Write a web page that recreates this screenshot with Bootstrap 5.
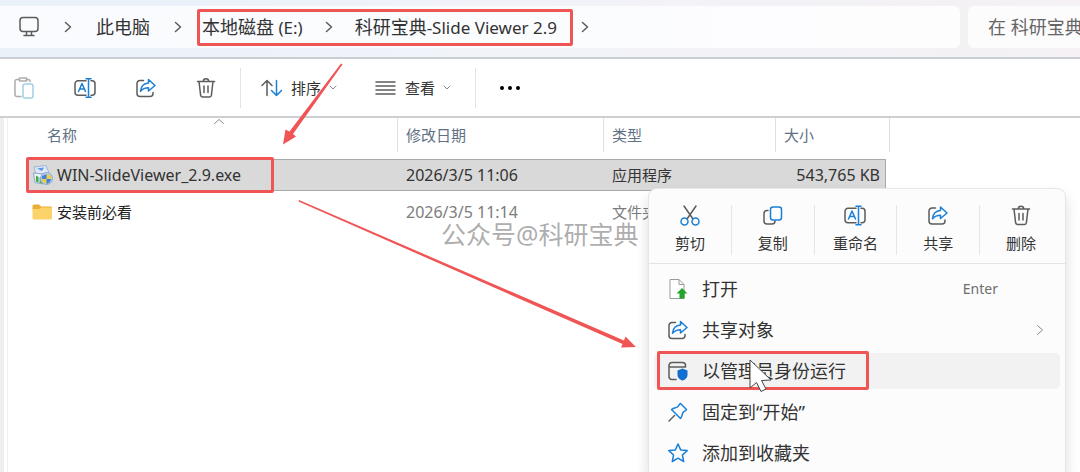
<!DOCTYPE html>
<html lang="zh-CN">
<head>
<meta charset="utf-8">
<meta name="viewport" content="width=device-width, initial-scale=1">
<title>科研宝典-Slide Viewer 2.9</title>
<link href="https://cdn.jsdelivr.net/npm/bootstrap@5.3.0/dist/css/bootstrap.min.css" rel="stylesheet">
<style>
  :root { --ink:#333; --dim:#6e6e6e; --blue:#1a7fd6; --steel:#5f7183; --mark-red:#f05555; }
  body { font-family:"Noto Sans","Noto Sans CJK SC",sans-serif; font-size:16px; line-height:24px; color:var(--ink); background:#fff; overflow:hidden; min-height:100vh; }
  svg { display:block; flex:none; }
  .ic { fill:none; stroke:#5c5c5c; stroke-width:1.5; stroke-linecap:round; stroke-linejoin:round; }
  .ic .b { stroke:var(--blue); }
  .ic.thin { stroke-width:1; stroke:#888; }
  button, a { color:inherit; }
  .plain { border:0; background:none; padding:0; }

  .addressbar { background:linear-gradient(90deg,#e9f1f9,#f1f3f9 45%,#f5f1f4); border-bottom:2px solid #c9ced4; padding:6px 0 9px; gap:8px; }
  .pathbox { background:linear-gradient(90deg,#f9fbfe,#fdfdfe); height:42px; border-radius:0 6px 6px 0; padding-left:18px; font-size:18px; }
  .pathbox a { text-decoration:none; white-space:nowrap; }
  .pathbox .en { font-size:17px; }
  .searchbox { width:112px; height:42px; border:0; border-radius:6px 0 0 6px; background:#fdfcfd; font-size:18px; color:#555; padding:0 0 0 20px; outline:0; }
  .searchbox::placeholder { color:#666; opacity:1; }
  .redbox { border:3px solid var(--mark-red); border-radius:2px; }
  .crumbs { height:37px; padding:0 13px 0 2px; margin-left:15px; margin-right:8px; gap:22px; }

  .commands { height:59px; padding:0 14px; border-bottom:2px solid #cdd0d3; font-size:15px; }
  .tools { gap:40px; }
  .divider { width:1px; height:40px; background:#e3e3e3; }
  .sorting { margin-left:20px; }
  .viewing { margin-left:38px; }

  .pane { padding-left:26px; position:relative; flex:1; }
  .gutter { position:absolute; inset:0 auto 0 0; width:8px; background:linear-gradient(90deg,#efefef 4px,#fff 4px 7px,#f1f1f1 7px); }
  .files { width:864px; table-layout:fixed; border-collapse:separate; border-spacing:0; font-size:15px; }
  .files th { font-weight:400; color:var(--steel); height:34px; padding:0 8px; border-right:1px solid #e0e0e0; position:relative; }
  .files th:first-child { padding-left:21px; }
  .files td { height:32px; padding:0 8px; white-space:nowrap; color:#7c7c7c; }
  .files td:first-child { padding-left:6px; color:#222; position:relative; }
  .files .space td { height:5px; padding:0; }
  .files .space.first td { height:7px; }
  .files .chosen td { background:#d9d9d9; border:1px solid #a9a9a9; border-width:1px 0; color:var(--ink); }
  .files .chosen td.last { border-right-width:1px; padding-right:5px; }
  .files .chosen td.blank { background:none; border:0; }
  .files .latin { font-size:16px; }
  .sort { position:absolute; left:187px; top:0; }
  .exe-mark { position:absolute; left:0; top:-3px; width:248px; height:36px; }

  .ctxmenu { position:absolute; left:648px; top:188px; bottom:0; width:418px; overflow:hidden; background:#fcfcfc; border:1px solid #e6e6e6; border-bottom:0; border-radius:9px 9px 0 0; box-shadow:0 8px 14px rgba(0,0,0,.14); z-index:3; }
  .quick { height:75px; border-bottom:1px solid #e4e4e4; padding:16px 3px 8px 0; font-size:15px; }
  .quick button { flex:1; border-right:1px solid #e6e6e6; gap:5px; }
  .quick button:last-child { border-right:0; }
  .entries { padding:7px 5px 0; }
  .entry { height:36px; margin-bottom:5px; padding:0 16px 0 14px; gap:14px; border-radius:5px; font-size:18px; position:relative; text-align:left; width:100%; }
  .entry:last-child { margin-bottom:0; }
  .entry.hot { background:#f2f2f2; }
  .entry .key { font-size:14px; color:#6d6d6d; margin-right:46px; }
  .run-mark { position:absolute; left:3px; top:-2px; width:212px; height:39px; }
  .watermark { position:absolute; left:441px; top:217px; font-size:25px; line-height:34px; color:rgba(120,120,120,.62); white-space:nowrap; z-index:2; }
  .over { position:absolute; left:0; top:0; z-index:5; pointer-events:none; }
</style>
<script src="https://cdn.jsdelivr.net/npm/bootstrap@5.3.0/dist/js/bootstrap.bundle.min.js"></script>
</head>
<body class="d-flex flex-column position-relative">

<svg width="0" height="0" class="position-absolute" aria-hidden="true">
  <symbol id="i-share" viewBox="0 0 20 20"><path d="M7.500 2.500H4A3 3 0 0 0 1 5.500V15.500A3 3 0 0 0 4 18.500H14A3 3 0 0 0 17 15.500V14.500"/><path stroke="#1a7fd6" d="M12.500 1.500L19 7.500L12.500 13V9.800C8.500 9.800 6.500 11 4.500 13.200C5 8.500 8 5.300 12.500 5Z"/></symbol>
  <symbol id="i-trash" viewBox="0 0 20 20"><path d="M1.500 3.500H18.500M3 3.500L4.600 17.200A2 2 0 0 0 6.500 19H13.500A2 2 0 0 0 15.400 17.200L17 3.500M7.300 3.500A2.700 2.700 0 0 1 12.700 3.500M8 8V14.500M12 8V14.500"/></symbol>
  <symbol id="i-rename" viewBox="0 0 22 20"><path d="M12 2.800H4A3 3 0 0 0 1 5.800V14.200A3 3 0 0 0 4 17.200H12M17 2.800H18A3 3 0 0 1 21 5.800V14.200A3 3 0 0 1 18 17.200H17"/><path stroke="#1a7fd6" d="M4.500 13.500L8 5.500L11.500 13.500M5.700 11H10.300M12 .8H17M12 19.200H17M14.500 .8V19.200"/></symbol>
  <symbol id="i-chev" viewBox="0 0 8 12"><path d="M1.500 1.500L6.500 6L1.500 10.500"/></symbol>
  <symbol id="i-down" viewBox="0 0 8 5"><path d="M1 1L4 4L7 1"/></symbol>
</svg>

<header class="addressbar d-flex">
  <nav class="pathbox d-flex align-items-center flex-grow-1" aria-label="路径">
    <svg class="ic" width="22" height="22" viewBox="0 0 22 22"><rect x="2" y="1.500" width="18" height="14" rx="3"/><path d="M8.500 16V19M13.500 16V19M6 19.500H16"/></svg>
    <svg class="ic ms-4" width="8" height="12"><use href="#i-chev"/></svg>
    <a href="#" class="ms-4">此电脑</a>
    <svg class="ic ms-4" width="8" height="12"><use href="#i-chev"/></svg>
    <div class="crumbs redbox d-flex align-items-center">
      <a href="#">本地磁盘<span class="en"> (E:)</span></a>
      <svg class="ic" width="8" height="12"><use href="#i-chev"/></svg>
      <a href="#">科研宝典<span class="en">-Slide Viewer 2.9</span></a>
    </div>
    <svg class="ic" width="8" height="12"><use href="#i-chev"/></svg>
  </nav>
  <input class="searchbox" type="text" aria-label="搜索" placeholder="在 科研宝典-Slide Viewer 2.9 中搜索">
</header>

<div class="commands d-flex align-items-center" role="toolbar">
  <div class="tools d-flex align-items-center">
    <button class="plain" aria-label="粘贴"><svg class="ic opacity-50" width="20" height="22" viewBox="0 0 20 22"><path d="M7 19.500H3A2 2 0 0 1 1 17.500V4.500A2 2 0 0 1 3 2.500H5M13 2.500H14A2 2 0 0 1 16 4.500M5.500 1H12.500V4H5.500Z"/><rect stroke="#4a9fd0" x="9" y="7" width="10" height="14" rx="2"/></svg></button>
    <button class="plain" aria-label="重命名"><svg class="ic" width="22" height="20"><use href="#i-rename"/></svg></button>
    <button class="plain" aria-label="共享"><svg class="ic" width="20" height="20"><use href="#i-share"/></svg></button>
    <button class="plain" aria-label="删除"><svg class="ic" width="20" height="20"><use href="#i-trash"/></svg></button>
  </div>
  <span class="divider ms-4"></span>
  <button class="plain sorting d-flex align-items-center gap-2"><svg class="ic" width="22" height="18" viewBox="0 0 22 18"><path d="M6 16.500V1.500M1 6.500L6 1.500L11 6.500"/><path class="b" d="M15.500 1.500V16.500M10.500 11.500L15.500 16.500L20.500 11.500"/></svg>排序<svg class="ic thin" width="8" height="5"><use href="#i-down"/></svg></button>
  <button class="plain viewing d-flex align-items-center gap-2"><svg class="ic" width="22" height="16" viewBox="0 0 22 16"><path d="M1 2H20M1 6H20M1 10H20M1 14H20"/></svg>查看<svg class="ic thin" width="8" height="5"><use href="#i-down"/></svg></button>
  <span class="divider ms-4"></span>
  <button class="plain ms-4" aria-label="更多"><svg width="20" height="6" viewBox="0 0 20 6"><circle cx="2" cy="3" r="2"/><circle cx="10" cy="3" r="2"/><circle cx="18" cy="3" r="2"/></svg></button>
</div>

<main class="pane">
  <div class="gutter"></div>
  <table class="files">
    <colgroup><col style="width:372px"><col style="width:206px"><col style="width:172px"><col style="width:110px"><col style="width:4px"></colgroup>
    <thead><tr>
      <th>名称<svg class="ic thin sort" width="12" height="7" viewBox="0 0 12 7"><path d="M1.500 5.500L6 1.500L10.500 5.500"/></svg></th>
      <th>修改日期</th><th>类型</th><th colspan="2">大小</th>
    </tr></thead>
    <tbody>
      <tr class="space first"><td colspan="5"></td></tr>
      <tr class="chosen">
        <td><div class="d-flex align-items-center gap-1 latin">
          <svg width="21" height="21" viewBox="0 0 21 21"><path d="M2 2L14 .5L17 8L4 10Z" fill="#dfe9f6" stroke="#9db5d8"/><path d="M5 3.500L12 2.500L10 6Z" fill="#5b95dd"/><path d="M1.500 8L11 9V19L3 17.500Z" fill="#eef4fb" stroke="#8fa5c2"/><path d="M4 10.500L6.500 12V17.500L4 16.500Z" fill="#3fa653"/><rect x="7.500" y="12" width="3.500" height="6.500" rx="1" fill="#58b268"/><circle cx="14.500" cy="13.500" r="6" fill="#b9d0ec" stroke="#8ba9d0"/><path d="M14.500 9L19 11V14H14.500Z" fill="#f4cd3c"/><path d="M10 11L14.500 9V14H10Z" fill="#3f83d6"/><path d="M10 14H14.500V19C12 18 10 16.500 10 14Z" fill="#f4cd3c"/><path d="M14.500 14H19C19 16.500 17 18 14.500 19Z" fill="#3f83d6"/></svg>
          <span>WIN-SlideViewer_2.9.exe</span></div><span class="redbox exe-mark"></span></td>
        <td class="latin">2026/3/5 11:06</td><td>应用程序</td><td class="latin last text-end">543,765 KB</td><td class="blank"></td>
      </tr>
      <tr class="space"><td colspan="5"></td></tr>
      <tr>
        <td><div class="d-flex align-items-center gap-1">
          <svg width="21" height="16" viewBox="0 0 21 16"><path d="M.5 2A1.500 1.500 0 0 1 2 .500H7L9 2.500H18.500A1.500 1.500 0 0 1 20 4V6H.5Z" fill="#e9ae38"/><path d="M.5 5H7L9 3.500H18.500A1.500 1.500 0 0 1 20 5V14A1.500 1.500 0 0 1 18.500 15.500H2A1.500 1.500 0 0 1 .5 14Z" fill="#fbd36a"/></svg>
          <span>安装前必看</span></div></td>
        <td class="latin">2026/3/5 11:14</td><td>文件夹</td><td></td><td></td>
      </tr>
    </tbody>
  </table>
</main>

<div class="watermark">公众号@科研宝典</div>

<div class="ctxmenu" role="menu">
  <div class="quick d-flex">
    <button class="plain d-flex flex-column align-items-center"><svg class="ic" width="20" height="21" viewBox="0 0 20 21"><path d="M4 1L13 14M16 1L7 14"/><circle class="b" cx="4.500" cy="16.500" r="3.500"/><circle class="b" cx="15.500" cy="16.500" r="3.500"/></svg>剪切</button>
    <button class="plain d-flex flex-column align-items-center"><svg class="ic" width="20" height="21" viewBox="0 0 20 21"><path d="M5 5.500H4A3 3 0 0 0 1 8.500V16A3 3 0 0 0 4 19H9A3 3 0 0 0 12 16"/><rect class="b" x="7.500" y="2" width="11" height="13" rx="2.500"/></svg>复制</button>
    <button class="plain d-flex flex-column align-items-center"><svg class="ic" width="22" height="21"><use href="#i-rename"/></svg>重命名</button>
    <button class="plain d-flex flex-column align-items-center"><svg class="ic" width="20" height="21"><use href="#i-share"/></svg>共享</button>
    <button class="plain d-flex flex-column align-items-center"><svg class="ic" width="20" height="21"><use href="#i-trash"/></svg>删除</button>
  </div>
  <div class="entries">
    <button class="plain entry d-flex align-items-center"><svg width="20" height="20" viewBox="0 0 20 20"><path d="M2 .500H11L16 5.500V19.500H2ZM11 .500V5.500H16" fill="#fff" stroke="#999"/><path d="M14 9L19.500 14.500H16.500V19.500H11.500V14.500H8.500Z" fill="#21a32c"/></svg><span class="flex-grow-1">打开</span><span class="key">Enter</span></button>
    <button class="plain entry d-flex align-items-center"><svg class="ic" width="20" height="20"><use href="#i-share"/></svg><span class="flex-grow-1">共享对象</span><svg class="ic thin" width="8" height="12"><use href="#i-chev"/></svg></button>
    <button class="plain entry hot d-flex align-items-center"><svg class="ic" width="20" height="20" viewBox="0 0 20 20"><path d="M8 18.500H4A3 3 0 0 1 1 15.500V4.500A3 3 0 0 1 4 1.500H14.500A3 3 0 0 1 17.500 4.500V6M1 6H17.500"/><path d="M14.500 7.500L19.500 9.500V14C19.500 17 17 18.800 14.500 19.500C12 18.800 9.500 17 9.500 14V9.500Z" fill="#0f6fd0" stroke="none"/></svg><span>以管理员身份运行</span><span class="redbox run-mark"></span></button>
    <button class="plain entry d-flex align-items-center"><svg class="ic" width="20" height="20" viewBox="0 0 20 20"><path d="M1 19L6.500 13.500"/><path class="b" d="M12.500 1.500L18.500 7.500C18 9 16 9 15 10.500C14 12 14.500 14 12.500 16.500L3.500 7.500C6 5.500 8 6 9.500 5C11 4 11 2 12.500 1.500Z"/></svg><span>固定到“开始”</span></button>
    <button class="plain entry d-flex align-items-center"><svg class="ic" width="20" height="20" viewBox="0 0 20 20"><path class="b" d="M10 1L12.700 6.900L19.200 7.600L14.400 12L15.700 18.500L10 15.200L4.300 18.500L5.600 12L.8 7.600L7.300 6.900Z"/></svg><span>添加到收藏夹</span></button>
  </div>
</div>

<svg class="over" width="800" height="400" viewBox="0 0 800 400" aria-hidden="true">
  <g fill="#f05555">
    <path d="M341 63.500L342.500 64.500L293 134L296 136.500L283 144.500L285.500 129.500L289.500 131.500Z"/>
    <path d="M299 200L624 340.500L625.500 336.500L636 347L621 347.500L622.500 344L298.500 201.500Z"/>
  </g>
  <path d="M750 360V388L756.500 382.500L761 391.500L766 389L761.500 380.500L771 380Z" fill="#fff" stroke="#444" stroke-width="1"/>
</svg>
</body>
</html>
